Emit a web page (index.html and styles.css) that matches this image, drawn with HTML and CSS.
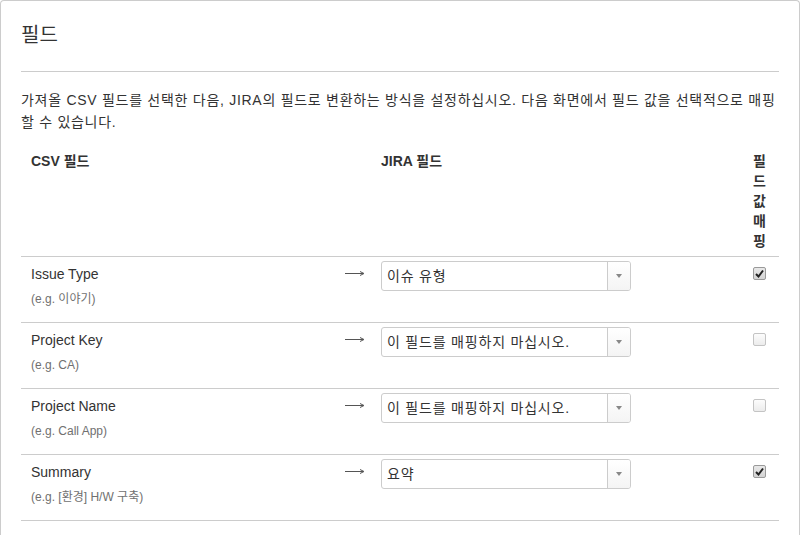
FILE: index.html
```html
<!DOCTYPE html>
<html lang="ko">
<head>
<meta charset="utf-8">
<title>필드</title>
<link rel="stylesheet" href="styles.css">
</head>
<body>
<div class="card">
  <h2 class="title">필드</h2>
  <hr class="rule">
  <p class="desc">가져올 CSV 필드를 선택한 다음, JIRA의 필드로 변환하는 방식을 설정하십시오. 다음 화면에서 필드 값을 선택적으로 매핑할 수 있습니다.</p>
  <table class="map">
    <colgroup>
      <col class="c-csv">
      <col class="c-arrow">
      <col class="c-jira">
      <col class="c-val">
    </colgroup>
    <thead>
      <tr>
        <th colspan="2">CSV 필드</th>
        <th>JIRA 필드</th>
        <th class="th-val">필드 값 매핑</th>
      </tr>
    </thead>
    <tbody>
      <tr>
        <td class="csv"><div class="name">Issue Type</div><div class="eg">(e.g. 이야기)</div></td>
        <td class="arrow"><svg width="20" height="8" viewBox="0 0 20 8"><path d="M0 4.5H18" stroke="#555" stroke-width="1"/><path d="M15 2.5L19 4.5L15 6.5" fill="none" stroke="#555" stroke-width="1"/></svg></td>
        <td class="jira"><div class="select"><span class="sel-text">이슈 유형</span><span class="sel-btn"><span class="tri"></span></span></div></td>
        <td class="val"><span class="cb checked"><svg width="9" height="9" viewBox="0 0 9 9"><path d="M1 5L3.5 7.5L8 1.5" fill="none" stroke="#222" stroke-width="2"/></svg></span></td>
      </tr>
      <tr>
        <td class="csv"><div class="name">Project Key</div><div class="eg">(e.g. CA)</div></td>
        <td class="arrow"><svg width="20" height="8" viewBox="0 0 20 8"><path d="M0 4.5H18" stroke="#555" stroke-width="1"/><path d="M15 2.5L19 4.5L15 6.5" fill="none" stroke="#555" stroke-width="1"/></svg></td>
        <td class="jira"><div class="select"><span class="sel-text">이 필드를 매핑하지 마십시오.</span><span class="sel-btn"><span class="tri"></span></span></div></td>
        <td class="val"><span class="cb"></span></td>
      </tr>
      <tr>
        <td class="csv"><div class="name">Project Name</div><div class="eg">(e.g. Call App)</div></td>
        <td class="arrow"><svg width="20" height="8" viewBox="0 0 20 8"><path d="M0 4.5H18" stroke="#555" stroke-width="1"/><path d="M15 2.5L19 4.5L15 6.5" fill="none" stroke="#555" stroke-width="1"/></svg></td>
        <td class="jira"><div class="select"><span class="sel-text">이 필드를 매핑하지 마십시오.</span><span class="sel-btn"><span class="tri"></span></span></div></td>
        <td class="val"><span class="cb"></span></td>
      </tr>
      <tr>
        <td class="csv"><div class="name">Summary</div><div class="eg">(e.g. [환경] H/W 구축)</div></td>
        <td class="arrow"><svg width="20" height="8" viewBox="0 0 20 8"><path d="M0 4.5H18" stroke="#555" stroke-width="1"/><path d="M15 2.5L19 4.5L15 6.5" fill="none" stroke="#555" stroke-width="1"/></svg></td>
        <td class="jira"><div class="select"><span class="sel-text">요약</span><span class="sel-btn"><span class="tri"></span></span></div></td>
        <td class="val"><span class="cb checked"><svg width="9" height="9" viewBox="0 0 9 9"><path d="M1 5L3.5 7.5L8 1.5" fill="none" stroke="#222" stroke-width="2"/></svg></span></td>
      </tr>
    </tbody>
  </table>
</div>
</body>
</html>
```

FILE: styles.css
```css
html, body {
  margin: 0;
  padding: 0;
  background: #fff;
}
body {
  font-family: "Liberation Sans", Arial, "Noto Sans CJK KR", sans-serif;
  font-size: 14px;
  color: #333;
}
.card {
  border: 1px solid #ccc;
  border-bottom: none;
  border-radius: 4px 4px 0 0;
  padding: 0 20px;
  height: 560px;
}
.title {
  margin: 20px 0 0;
  font-size: 20px;
  line-height: 28px;
  font-weight: normal;
  color: #333;
}
.rule {
  margin: 22px 0 0;
  border: 0;
  border-top: 1px solid #ccc;
  height: 0;
}
.desc {
  margin: 17px 0 0;
  line-height: 22px;
  letter-spacing: 0.72px;
}
.map {
  margin-top: 9px;
  width: 758px;
  border-collapse: collapse;
  table-layout: fixed;
}
.c-csv { width: 314px; }
.c-arrow { width: 36px; }
.c-jira { width: 374px; }
.c-val { width: 34px; }
.map th {
  text-align: left;
  vertical-align: top;
  font-weight: bold;
  line-height: 20px;
  padding: 9px 10px 5px;
  border-bottom: 1px solid #ccc;
  color: #333;
}
.map th.th-val {
  padding: 9px 10px 5px 8px;
}
.map td {
  vertical-align: top;
  border-bottom: 1px solid #ccc;
  height: 66px;
  padding: 0;
  box-sizing: border-box;
}
.csv {
  padding: 7px 10px 0 !important;
}
.name {
  line-height: 20px;
}
.eg {
  margin-top: 5px;
  font-size: 12px;
  line-height: 20px;
  color: #707070;
}
.arrow {
  padding: 12px 0 0 10px !important;
}
.arrow svg {
  display: block;
}
.jira {
  padding: 4px 10px 0 !important;
}
.select {
  display: flex;
  width: 250px;
  height: 30px;
  box-sizing: border-box;
  border: 1px solid #ccc;
  border-radius: 3px;
  background: #fff;
}
.sel-text {
  flex: 1;
  padding-left: 5px;
  line-height: 28px;
  color: #333;
  white-space: nowrap;
  overflow: hidden;
  letter-spacing: 0.8px;
}
.sel-btn {
  width: 22px;
  border-left: 1px solid #ccc;
  background: linear-gradient(#fff, #f4f4f4);
  border-radius: 0 2px 2px 0;
  display: flex;
  align-items: center;
  justify-content: center;
}
.tri {
  width: 0;
  height: 0;
  border-left: 3px solid transparent;
  border-right: 3px solid transparent;
  border-top: 4px solid #888;
}
.val {
  padding: 10px 0 0 8px !important;
}
.cb {
  display: flex;
  align-items: center;
  justify-content: center;
  width: 13px;
  height: 13px;
  box-sizing: border-box;
  border: 1px solid #c4c4c4;
  border-radius: 2px;
  background: linear-gradient(#fcfcfc, #ececec);
}
.cb.checked {
  border-color: #9a9a9a;
  background: linear-gradient(#e8e8e8, #d4d4d4);
}
.cb svg {
  display: block;
}
```
